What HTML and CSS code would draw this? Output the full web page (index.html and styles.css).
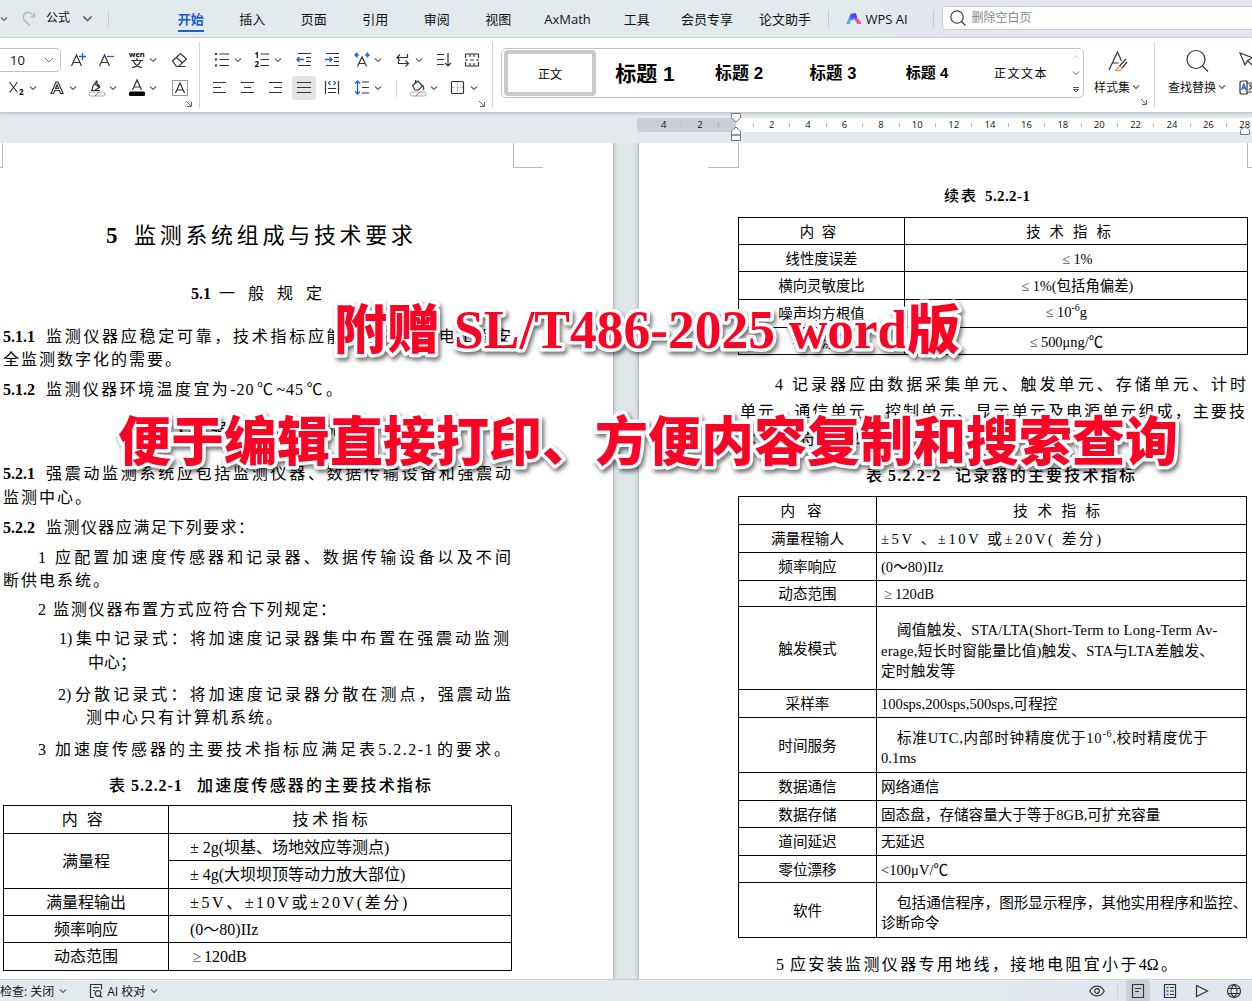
FILE: index.html
```html
<!DOCTYPE html>
<html lang="zh-CN">
<head>
    <meta charset="UTF-8">
    <title>WPS 文字</title>
    <link rel="stylesheet" href="styles.css">
</head>

<body>
    <svg class="defs">
        <symbol id="caret" viewBox="0 0 8 8"><path d="M1 2.500l3 3 3-3" fill="none" stroke="#666" stroke-width="1.200"/></symbol>
        <symbol id="corner" viewBox="0 0 8 8"><path d="M1 1l5 5M6.500 2v4.500h-4.500" fill="none" stroke="#666"/></symbol>
    </svg>

    <header class="tabbar">
        <div class="quick">
            <svg class="caret"><use href="#caret"/></svg>
            <svg class="redo" viewBox="0 0 14 16"><path d="M8 14.500L2.500 9.500C-.5 5 3 1 7 1.500c3 .3 4 2.500 5 4.500M12.500 1.500V6H8" fill="none" stroke="#adb3b8" stroke-width="1.200"/></svg>
            <span>公式</span>
            <svg class="caret big"><use href="#caret"/></svg>
        </div>
        <nav class="tabs">
            <a class="tab active"><span>开始</span></a>
            <a class="tab">插入</a>
            <a class="tab">页面</a>
            <a class="tab">引用</a>
            <a class="tab">审阅</a>
            <a class="tab">视图</a>
            <a class="tab ax">AxMath</a>
            <a class="tab">工具</a>
            <a class="tab vip">会员专享</a>
            <a class="tab paper">论文助手</a>
        </nav>
        <div class="ai">
            <svg width="16" height="14" viewBox="0 0 16 14">
                <defs><linearGradient id="g" x1="0" y1="1" x2="1" y2="0"><stop offset="0" stop-color="#36b4ff"/><stop offset=".5" stop-color="#3b55ff"/><stop offset="1" stop-color="#7a3cff"/></linearGradient></defs>
                <path d="M0 12L2 7.500h3L4 12z" fill="#45b6ff"/>
                <path d="M2 8L5 1.500h5L7 8z" fill="url(#g)"/>
                <path d="M7.500 1.500H10l1.500 5.500-3 .5z" fill="#4a3cf5"/>
                <path d="M8 7.500c3-2 5.500-1 7.500 4.500h-4.500c-.5-2-1.500-3-3-4.500z" fill="#f0559b"/>
            </svg>
            <span>WPS AI</span>
        </div>
        <div class="search">
            <svg width="16" height="16" viewBox="0 0 16 16"><circle cx="7" cy="7" r="6.200" fill="none" stroke="#444" stroke-width="1.200"/><path d="M11.500 11.500l4 4" stroke="#444" stroke-width="1.200"/></svg>
            <span>删除空白页</span>
        </div>
    </header>

    <section class="ribbon">
        <div class="group font-group">
            <div class="row">
                <div class="fontsize"><span>10</span><svg viewBox="0 0 10 6"><path d="M1 1l4 4 4-4" fill="none" stroke="#777"/></svg></div>
                <div class="tool"><svg viewBox="0 0 20 20"><path d="M2.500 16L7.500 5l5 11M4.200 12.500h6.600" class="ln"/><path d="M13.500 3v7M10 6.500h7" class="bl"/></svg></div>
                <div class="tool"><svg viewBox="0 0 20 20"><path d="M2.500 16L7.500 5l5 11M4.200 12.500h6.600" class="ln"/><path d="M10 6.500h7" class="bl"/></svg></div>
                <div class="tool drop g2"><svg viewBox="0 0 20 20"><text x="2" y="7" class="wen">wen</text><path d="M4 10.500h12M10 8v2.500M6.500 11c1.500 4 4.500 6 8.500 6.500M13.500 11c-1.500 4-4.500 6-8.500 6.500" class="ln"/></svg><svg class="caret"><use href="#caret"/></svg></div>
                <div class="tool g3"><svg viewBox="0 0 20 20"><path d="M2.500 11l8-7.500 6 5.500-8 7.500h-2zM6.500 7.500l6 5.500M6.500 16.500h9" class="ln"/></svg></div>
            </div>
            <div class="row second">
                <div class="tool drop"><svg viewBox="0 0 20 20"><path d="M2.500 4l8 10.500M10.500 4l-8 10.500" class="ln"/><text x="12" y="17" class="sub">2</text></svg><svg class="caret"><use href="#caret"/></svg></div>
                <div class="tool drop"><svg viewBox="0 0 20 20"><path d="M4 15.500L9 4h2l5 11.500h-2.500l-1.200-3H7.800l-1.200 3zM8.500 10.500h3L10 6.800z" class="ln"/></svg><svg class="caret"><use href="#caret"/></svg></div>
                <div class="tool drop"><svg viewBox="0 0 20 20"><path d="M4 12.500h9M5 12l1-4 4-5.500M8 6l4.500 3.500L8 12M10 2.500v3l3 3" class="ln"/><rect x="2" y="14" width="16" height="4" rx="2" fill="#fff" stroke="#aaa"/><path d="M8 18l4-4" stroke="#e05050"/></svg><svg class="caret"><use href="#caret"/></svg></div>
                <div class="tool drop"><svg viewBox="0 0 20 20"><path d="M5.500 12L10 2l4.500 10M7 9h6" class="ln"/><rect x="2" y="13.500" width="16" height="4.500" rx="1.500"/></svg><svg class="caret"><use href="#caret"/></svg></div>
                <div class="tool g3"><svg viewBox="0 0 20 20"><rect x="2.500" y="2.500" width="15" height="15" fill="none" stroke="#999"/><path d="M5.500 15L10 5l4.500 10M7 12h6" class="ln"/></svg></div>
            </div>
            <svg class="launcher"><use href="#corner"/></svg>
        </div>

        <div class="group para-group">
            <div class="row">
                <div class="tool drop"><svg viewBox="0 0 20 20"><path d="M7.500 4H17M7.500 9.500H17M7.500 15.500H17" class="ln"/><path d="M3 4h2M3 9.500h2M3 15.500h2" stroke="#333" stroke-width="2"/></svg><svg class="caret"><use href="#caret"/></svg></div>
                <div class="tool drop"><svg viewBox="0 0 20 20"><path d="M8.500 4H17M8.500 9.500H17M8.500 15.500H17" class="ln"/><text x="2.500" y="8" class="num">1</text><text x="2.500" y="17" class="num">2</text></svg><svg class="caret"><use href="#caret"/></svg></div>
                <div class="tool g2"><svg viewBox="0 0 20 20"><path d="M4 3.500h13M12 7.500h5M12 11.500h5M4 15.500h13" class="ln"/><path d="M3 9.500h7M5.500 7L3 9.500 5.500 12" class="bl"/></svg></div>
                <div class="tool"><svg viewBox="0 0 20 20"><path d="M4 3.500h13M12 7.500h5M12 11.500h5M4 15.500h13" class="ln"/><path d="M3 9.500h7M7.500 7l2.500 2.500L7.500 12" class="bl"/></svg></div>
                <div class="tool drop g2"><svg viewBox="0 0 20 20"><path d="M5.500 16.500L10 7l4.500 9.500M7 13.500h6" class="ln"/><path d="M3 5h4M13 5h4M5.500 2.500L3 5l2.500 2.500M14.500 2.500L17 5l-2.500 2.500" class="bl"/></svg><svg class="caret"><use href="#caret"/></svg></div>
                <div class="tool drop g1"><svg viewBox="0 0 20 20"><path d="M14.500 4v3.500H4M7 4.500l-3 3 3 3M5.500 10.500v3h10M12.500 10.500l3 3-3 3" class="ln"/></svg><svg class="caret"><use href="#caret"/></svg></div>
                <div class="tool g1"><svg viewBox="0 0 20 20"><path d="M3 4.500h7M3 9.500h7M3 14.500h7M14 3v13M11 13l3 3 3-3" class="ln"/></svg></div>
                <div class="tool"><svg viewBox="0 0 20 20"><path d="M3.500 8V4h13v4M3.500 12v4h13v-4M8 4v3M12 4v3M8 13v3M12 13v3M3 10h3M8 10h4M14 10h3" class="ln"/></svg></div>
            </div>
            <div class="row second">
                <div class="tool"><svg viewBox="0 0 20 20"><path d="M3 4.500h13M3 9.500h8M3 14.500h13" class="ln"/></svg></div>
                <div class="tool"><svg viewBox="0 0 20 20"><path d="M3 4.500h13M6 9.500h7M3 14.500h13" class="ln"/></svg></div>
                <div class="tool"><svg viewBox="0 0 20 20"><path d="M3 4.500h13M8 9.500h8M3 14.500h13" class="ln"/></svg></div>
                <div class="tool on"><svg viewBox="0 0 20 20"><path d="M3 4.500h14M3 9.500h14M3 14.500h14" class="ln"/></svg></div>
                <div class="tool"><svg viewBox="0 0 20 20"><path d="M3.500 3v13M16.500 3v13M6 10.500h8M6 14.500h8" class="ln"/><path d="M8.500 3L6.500 5l2 2M11.500 3l2 2-2 2" class="bl"/></svg></div>
                <div class="tool drop g2"><svg viewBox="0 0 20 20"><path d="M10 4h7M10 9.500h7M10 15h7" class="ln"/><path d="M5.500 3v13M3 5.500L5.500 3 8 5.500M3 13.500L5.500 16 8 13.500" class="bl"/></svg><svg class="caret"><use href="#caret"/></svg></div>
                <i class="sep"></i>
                <div class="tool drop"><svg viewBox="0 0 20 20"><path d="M8 2l-1 3M4.500 7.500L10 3l4.500 5-4 4H7z" class="ln"/><path d="M14 7c2 1 2 3 1.500 5" class="ln"/><rect x="2" y="14" width="16" height="4" rx="2" fill="#fff" stroke="#aaa"/><path d="M8 18l4-4" stroke="#e05050"/></svg><svg class="caret"><use href="#caret"/></svg></div>
                <div class="tool drop"><svg viewBox="0 0 20 20"><rect x="3.500" y="3.500" width="12" height="12" rx="1" class="ln"/><path d="M9.500 4v11M4 9.500h11" stroke="#aaa" stroke-dasharray="1 1"/></svg><svg class="caret"><use href="#caret"/></svg></div>
            </div>
            <svg class="launcher"><use href="#corner"/></svg>
        </div>

        <div class="gallery">
            <div class="style picked">正文</div>
            <div class="style h1">标题 1</div>
            <div class="style h2">标题 2</div>
            <div class="style h3">标题 3</div>
            <div class="style h4">标题 4</div>
            <div class="style body-text">正文文本</div>
            <div class="scroller">
                <svg viewBox="0 0 8 8"><path d="M1 5.500l3-3 3 3" fill="none" stroke="#ccc"/></svg>
                <svg viewBox="0 0 8 8"><path d="M1 2.500l3 3 3-3" fill="none" stroke="#666"/></svg>
                <svg viewBox="0 0 8 8"><path d="M1 2.500h6M1.500 4.500h5L4 7z" fill="none" stroke="#555"/></svg>
            </div>
        </div>

        <div class="group big-group sets">
            <svg class="pic" viewBox="0 0 24 24"><path d="M4 21L12.500 3l4 9M7.500 14h6" class="ln"/><path d="M21 10l-6.500 7M22 13l-5 6" class="ln"/><path d="M10.500 21.500c2 0 1.500-3.500 4-4.500 2 .5 3 2 2 3.500-1.500 2-4 1.500-6 1z" fill="#fbd9c3" stroke="#e07b3c"/></svg>
            <div class="label">样式集<svg class="caret"><use href="#caret"/></svg></div>
            <svg class="launcher"><use href="#corner"/></svg>
        </div>
        <div class="group big-group find">
            <svg class="pic" viewBox="0 0 24 24"><circle cx="11" cy="10.500" r="9" class="ln"/><path d="M17.500 17l5.500 5.500" class="ln"/></svg>
            <div class="label">查找替换<svg class="caret"><use href="#caret"/></svg></div>
        </div>
        <div class="edge">
            <svg viewBox="0 0 20 20"><path d="M1 3l5 12 2.500-4.500L14 8zM9 11l5 5" class="ln"/></svg>
            <svg viewBox="0 0 20 20"><path d="M8 3H3a2 2 0 00-2 2v9a2 2 0 002 2h5zM8 5h10v9H8" class="ln"/><path d="M2.500 12L4.800 6 7 12M3 10h3.500" class="bl"/><path d="M10 7h6M10 12l5-4M11 8l4 4" class="ln"/></svg>
        </div>
    </section>

    <div class="rulerbar">
        <div class="ruler">
            <div class="neg"><span>4</span><span>2</span><i></i></div>
            <div class="pos">
                <span>2</span><span>4</span><span>6</span><span>8</span><span>10</span><span>12</span><span>14</span><span>16</span><span>18</span><span>20</span><span>22</span><span>24</span><span>26</span><span>28</span>
            </div>
        </div>
        <svg class="handle first" viewBox="0 0 12 30"><path d="M1.500 1.500h9v4.500L6 10 1.500 6zM6 15l4.500 4v4h-9v-4zM1.500 23h9v5.500h-9z" fill="#fff" stroke="#777"/></svg>
        <svg class="handle last" viewBox="0 0 12 30"><path d="M6 14.500l4.500 4v4h-9v-4z" fill="#fff" stroke="#777"/></svg>
    </div>

    <main class="desk">
        <article class="page left">
            <div class="crops"><i></i><i></i></div>
            <p class="line title"><b>5</b><span>监测系统组成与技术要求</span></p>
            <p class="line sec"><b>5.1</b><span>一般规定</span></p>
            <p class="line full a511"><b>5.1.1</b><span>监测仪器应稳定可靠，技术指标应能满足不同水电工程安</span></p>
            <p class="line a511b"><span>全监测数字化的需要。</span></p>
            <p class="line a512"><b>5.1.2</b><span>监测仪器环境温度宜为<em>-20℃~45℃</em>。</span></p>
            <p class="line sec2"><b>5.2</b><span>强震动监测系统</span></p>
            <p class="line full a521"><b>5.2.1</b><span>强震动监测系统应包括监测仪器、数据传输设备和强震动</span></p>
            <p class="line a521b"><span>监测中心。</span></p>
            <p class="line a522"><b>5.2.2</b><span>监测仪器应满足下列要求：</span></p>
            <p class="line i1"><u>1</u><span>应配置加速度传感器和记录器、数据传输设备以及不间</span></p>
            <p class="line i1b"><span>断供电系统。</span></p>
            <p class="line i2"><u>2</u><span>监测仪器布置方式应符合下列规定：</span></p>
            <p class="line s1"><u>1)</u><span>集中记录式：将加速度记录器集中布置在强震动监测</span></p>
            <p class="line s1b"><span>中心；</span></p>
            <p class="line s2"><u>2)</u><span>分散记录式：将加速度记录器分散在测点，强震动监</span></p>
            <p class="line s2b"><span>测中心只有计算机系统。</span></p>
            <p class="line i3"><u>3</u><span>加速度传感器的主要技术指标应满足表<em>5.2.2-1</em>的要求。</span></p>
            <p class="line cap1"><span>表</span><b>5.2.2-1</b><span>加速度传感器的主要技术指标</span></p>
            <table class="t1">
                <colgroup><col class="k"><col></colgroup>
                <tr class="h28"><td class="wide">内 容</td><td class="mid">技术指标</td></tr>
                <tr class="h27"><td rowspan="2">满量程</td><td>± 2g(坝基、场地效应等测点)</td></tr>
                <tr class="h28"><td>± 4g(大坝坝顶等动力放大部位)</td></tr>
                <tr class="h27"><td>满量程输出</td><td class="volt">±5V、±10V或±20V(差分)</td></tr>
                <tr class="h27"><td>频率响应</td><td>(0～80)IIz</td></tr>
                <tr class="h28"><td>动态范围</td><td><i class="cmp">≥</i>120dB</td></tr>
            </table>
        </article>

        <article class="page right">
            <div class="crops"><i></i><i></i></div>
            <p class="line cont"><span>续表</span><b>5.2.2-1</b></p>
            <table class="t2">
                <colgroup><col class="k"><col></colgroup>
                <tr class="h27"><td class="wide">内 容</td><td class="wider">技术指标</td></tr>
                <tr class="h27"><td>线性度误差</td><td><i class="cmp">≤</i>1%</td></tr>
                <tr class="h28"><td>横向灵敏度比</td><td><i class="cmp">≤</i>1%(包括角偏差)</td></tr>
                <tr class="h28"><td>噪声均方根值</td><td class="shift up"><i class="cmp">≤</i>10<sup>-6</sup>g</td></tr>
                <tr class="h27"><td>零位漂移</td><td class="shift"><i class="cmp">≤</i>500μng/℃</td></tr>
            </table>
            <p class="line i4"><u>4</u><span>记录器应由数据采集单元、触发单元、存储单元、计时</span></p>
            <p class="line i4b"><span>单元、通信单元、控制单元、显示单元及电源单元组成，主要技</span></p>
            <p class="line i4c"><span>术指应符表5.2.2-2</span></p>
            <p class="line cap2"><span>表</span><b>5.2.2-2</b><span>记录器的主要技术指标</span></p>
            <table class="t3">
                <colgroup><col class="k"><col></colgroup>
                <tr class="h28"><td class="widest">内容</td><td class="wider mid">技术指标</td></tr>
                <tr class="h28"><td>满量程输人</td><td class="volt">±5V 、±10V 或±20V( 差分)</td></tr>
                <tr class="h28"><td>频率响应</td><td>(0～80)IIz</td></tr>
                <tr class="h26"><td>动态范围</td><td><i class="cmp">≥</i>120dB</td></tr>
                <tr class="h83"><td>触发模式</td><td class="multi trig">阈值触发、STA/LTA(Short-Term to Long-Term Av-<br>erage,短长时窗能量比值)触发、STA与LTA差触发、<br>定时触发等</td></tr>
                <tr class="h28"><td>采样率</td><td>100sps,200sps,500sps,可程控</td></tr>
                <tr class="h55"><td>时间服务</td><td class="multi"><span class="loose">标准UTC,内部时钟精度优于10<sup>-6</sup>,校时精度优于</span><br>0.1ms</td></tr>
                <tr class="h28"><td>数据通信</td><td>网络通信</td></tr>
                <tr class="h27"><td>数据存储</td><td>固态盘，存储容量大于等于8GB,可扩充容量</td></tr>
                <tr class="h28"><td>道间延迟</td><td>无延迟</td></tr>
                <tr class="h27"><td>零位漂移</td><td>&lt;100μV/℃</td></tr>
                <tr class="h55"><td>软件</td><td class="multi">包括通信程序，图形显示程序，其他实用程序和监控、<br>诊断命令</td></tr>
            </table>
            <p class="line i5"><u>5</u><span>应安装监测仪器专用地线，接地电阻宜小于4Ω。</span></p>
        </article>
    </main>

    <footer class="status">
        <span>检查: 关闭</span>
        <svg class="caret"><use href="#caret"/></svg>
        <svg class="proof" viewBox="0 0 14 14"><path d="M5 13.500H1.500V.5h11v5M4 3.500h6M4 6.500h2" class="ln"/><circle cx="9" cy="9.500" r="2.800" class="ln"/><path d="M11 11.500l2 2" class="ln"/></svg>
        <span>AI 校对</span>
        <svg class="caret"><use href="#caret"/></svg>
        <div class="views">
            <div class="view"><svg viewBox="0 0 16 16"><path d="M.8 8c3.500-6.500 10.900-6.500 14.400 0-3.500 6.500-10.900 6.500-14.400 0z" class="ln"/><circle cx="8" cy="8" r="2.300" class="ln"/></svg></div>
            <i class="sep"></i>
            <div class="view on"><svg viewBox="0 0 16 16"><path d="M2.500 1.500h11v13h-11zM5 5.500h6M5 8.500h4" class="ln"/></svg></div>
            <div class="view"><svg viewBox="0 0 16 16"><path d="M2.500 1.500h11v13h-11zM8 4.500h4M8 8h4M8 11.500h4" class="ln"/><path d="M4.500 4.500h2M4.500 8h2M4.500 11.500h2" class="bl"/></svg></div>
            <div class="view"><svg viewBox="0 0 16 16"><path d="M2.500 2.500v11l11-5.500z" class="ln"/></svg></div>
            <div class="view"><svg viewBox="0 0 16 16"><circle cx="8" cy="8" r="6.500" class="ln"/><path d="M8 1.500c-4 4-4 9 0 13 4-4 4-9 0-13zM2 5.500h12M2 10.500h12" class="ln"/></svg></div>
        </div>
    </footer>

    <svg class="banner" viewBox="0 0 1252 200">
        <text x="334" y="69" class="han">附赠</text>
        <text x="454" y="68" textLength="321" lengthAdjust="spacingAndGlyphs" class="lat">SL/T486-2025</text>
        <text x="789" y="68" textLength="118" lengthAdjust="spacingAndGlyphs" class="lat">word</text>
        <text x="907" y="69" class="han">版</text>
        <text x="118" y="181" textLength="1060" class="han">便于编辑直接打印、方便内容复制和搜索查询</text>
    </svg>
</body>
</html>
```
FILE: styles.css
```css
* {
    box-sizing: border-box;
}

body {
    position: relative;
    width: 1252px;
    height: 1001px;
    margin: 0;
    overflow: hidden;
    display: flex;
    flex-direction: column;
    background: #e2eaed;
    color: #111;
    font-family: "Open Sans", "Noto Sans CJK SC", sans-serif;
    font-size: 13px;
}

p {
    margin: 0;
}

svg {
    display: block;
    flex: none;
}

.defs {
    position: absolute;
    width: 0;
    height: 0;
}

.caret {
    width: 8px;
    height: 8px;
}

.ln {
    fill: none;
    stroke: #333;
    stroke-width: 1.2;
}

.bl {
    fill: none;
    stroke: #1b62d6;
    stroke-width: 1.3;
}

/* Tab bar */
.tabbar {
    flex: none;
    height: 38px;
    display: flex;
    align-items: center;
    border-bottom: 1px solid #c9cdd2;
    background: linear-gradient(90deg, #e2eaed 70%, #e2e6ee 76%);
}

.quick {
    width: 109px;
    height: 16px;
    display: flex;
    align-items: center;
    font-size: 12px;
    border-right: 1px solid #c5cacf;
}

.quick span {
    margin-top: -3px;
}

.redo {
    width: 14px;
    height: 16px;
    margin: 0 10px 0 14px;
}

.quick .big {
    width: 11px;
    height: 11px;
    margin-left: 12px;
}

.tabs {
    display: flex;
    height: 38px;
    margin-left: 51px;
}

.tab {
    width: 61.5px;
    line-height: 38px;
    text-align: center;
    white-space: nowrap;
}

.tab.ax {
    width: 77px;
}

.tab.vip {
    width: 79px;
}

.tab.paper {
    width: 77px;
}

.tab.active {
    color: #1b5fd0;
    font-weight: bold;
}

.tab.active span {
    display: inline-block;
    height: 32px;
    border-bottom: 2px solid #1b5fd0;
}

.ai {
    width: 106px;
    height: 18px;
    margin-left: 4px;
    padding-left: 17px;
    display: flex;
    align-items: center;
    gap: 4px;
    border-left: 1px solid #c5cacf;
    border-right: 1px solid #c5cacf;
    white-space: nowrap;
}

.search {
    flex: 1;
    height: 24px;
    margin: 0 -6px 2px 8px;
    padding-left: 7px;
    display: flex;
    align-items: center;
    gap: 6px;
    background: #fff;
    border: 1px solid #cbcfd4;
    border-radius: 4px;
    color: #888;
    font-size: 12px;
}

.search span {
    margin-top: -1px;
}

/* Ribbon */
.ribbon {
    flex: none;
    height: 75px;
    display: flex;
    background: #fff;
    border-bottom: 1px solid #c4c9cd;
    box-shadow: 0 1px 3px #c5cbd0;
}

.group {
    flex: none;
    margin-top: 4px;
    height: 66px;
    padding-top: 4px;
    border-right: 1px solid #d5d5d5;
}

.font-group {
    width: 200px;
}

.para-group {
    width: 293px;
    padding-left: 8px;
}

.row {
    display: flex;
    align-items: center;
    height: 28px;
}

.font-group .second {
    padding-left: 3px;
}

.para-group .second {
    margin-left: -2px;
}

.fontsize {
    width: 71px;
    height: 24px;
    margin: 0 4px 0 -10px;
    padding: 0 6px 0 19px;
    display: flex;
    align-items: center;
    justify-content: space-between;
    border: 1px solid #c4c4c4;
    border-radius: 4px;
}

.fontsize svg {
    width: 10px;
    height: 6px;
}

.tool {
    flex: none;
    display: flex;
    align-items: center;
    width: 28px;
    height: 24px;
    padding-left: 4px;
}

.tool svg {
    width: 20px;
    height: 20px;
    overflow: visible;
}

.tool .caret {
    width: 8px;
    height: 8px;
    margin-left: 2px;
}

.tool.drop {
    width: 40px;
}

.tool.on {
    background: #e3e3e3;
    border-radius: 3px;
    width: 24px;
    margin: 0 2px;
    padding-left: 2px;
}

.g1 {
    margin-left: 1px;
}

.g2 {
    margin-left: 2px;
}

.g3 {
    margin-left: 3px;
}

.wen {
    font: bold 7.5px "Open Sans", sans-serif;
}

.sub,
.num {
    font: bold 8px "Open Sans", sans-serif;
}

.sep {
    width: 1px;
    height: 17px;
    background: #cfcfcf;
}

.row .sep {
    margin: 0 7px 0 8px;
}

.launcher {
    width: 8px;
    height: 8px;
    margin: -2px 6px 0 auto;
}

.gallery {
    flex: none;
    width: 583px;
    height: 50px;
    margin: 10px 0 0 8px;
    padding-left: 2px;
    display: flex;
    align-items: center;
    border: 1px solid #c4c4c4;
    border-radius: 5px;
    color: #000;
}

.style {
    flex: none;
    width: 94px;
    height: 46px;
    padding-bottom: 3px;
    display: flex;
    align-items: center;
    justify-content: center;
    font-family: "Liberation Sans", "Noto Sans CJK SC", sans-serif;
    white-space: pre;
}

.picked {
    width: 92px;
    margin-right: 2px;
    padding: 0;
    border: 4px solid #c9c9c9;
    border-radius: 4px;
    font-size: 12px;
}

.h1 {
    font-size: 21px;
    font-weight: bold;
}

.h2 {
    font-size: 17px;
    font-weight: bold;
}

.h3 {
    font-size: 16.5px;
    font-weight: bold;
}

.h4 {
    font-size: 15px;
    font-weight: bold;
}

.body-text {
    padding-bottom: 1px;
    font-size: 12px;
    letter-spacing: 1.5px;
}

.scroller {
    display: flex;
    flex-direction: column;
    gap: 8px;
    margin-left: 4px;
}

.scroller svg {
    width: 8px;
    height: 8px;
}

.big-group {
    display: flex;
    flex-direction: column;
    align-items: center;
    font-size: 12px;
}

.sets {
    width: 71px;
    padding-right: 4px;
}

.find {
    width: 84px;
    border: 0;
}

.pic {
    width: 24px;
    height: 24px;
    margin: 3px 0 5px;
}

.label {
    display: flex;
    align-items: center;
    gap: 2px;
    height: 18px;
    white-space: nowrap;
}

.sets .launcher {
    margin: 2px 2px 0 auto;
}

.edge {
    padding-top: 12px;
    display: flex;
    flex-direction: column;
    gap: 8px;
}

.edge svg {
    width: 20px;
    height: 20px;
}

/* Ruler */
.rulerbar {
    flex: none;
    position: relative;
    height: 30px;
    padding: 5px 0 0 637px;
}

.ruler {
    display: flex;
    height: 14px;
    font-size: 9.5px;
    line-height: 14px;
    overflow: hidden;
    border-radius: 4px 0 0 4px;
}

.neg {
    flex: none;
    width: 99px;
    padding-left: 8px;
    display: flex;
    align-items: center;
    background: #cbced4;
}

.pos {
    flex: 1;
    padding-left: 17px;
    display: flex;
    align-items: center;
    background: #fff;
}

.ruler span {
    flex: none;
    width: 36.4px;
    height: 4px;
    line-height: 4px;
    text-align: center;
    border-left: 1px solid #b5b8bd;
}

.neg span:first-child {
    border-left-color: transparent;
}

.neg i {
    height: 4px;
    border-left: 1px solid #a5a8ad;
}

.handle {
    position: absolute;
    top: -1px;
    width: 12px;
    height: 30px;
}

.first {
    left: 730px;
}

.last {
    left: 1239px;
}

/* Pages */
.desk {
    flex: none;
    height: 836px;
    display: flex;
    gap: 24px;
    overflow: hidden;
    background: #e0e7eb;
}

.page {
    flex: none;
    height: 836px;
    background: #fff;
    color: #000;
    font-family: "Liberation Serif", "Noto Sans CJK SC", serif;
    font-size: 16px;
    box-shadow: 0 0 4px #b0b6bb;
}

.left {
    width: 614px;
    padding-left: 3px;
    border-right: 1px solid #b9bdc1;
}

.right {
    width: 614px;
    padding-left: 99px;
    border-left: 1px solid #b9bdc1;
}

.crops {
    height: 25px;
    display: flex;
    justify-content: space-between;
}

.crops i {
    border: 0 solid #bbb;
    border-bottom-width: 1px;
}

.left .crops {
    width: 543px;
    margin-left: -3px;
}

.left .crops i:first-child {
    width: 3px;
    border-right-width: 1px;
}

.left .crops i:last-child {
    width: 30px;
    border-left-width: 1px;
}

.right .crops {
    margin-left: -30px;
}

.right .crops i:first-child {
    width: 31px;
    border-right-width: 1px;
}

.right .crops i:last-child {
    width: 5px;
    border-left-width: 1px;
}

/* every printed line is stretched to its own measure */
.line {
    display: flex;
    height: 23px;
    line-height: 23px;
    white-space: nowrap;
}

.line span {
    flex: 1;
    text-align: justify;
    text-align-last: justify;
}

.line b {
    width: 43px;
}

.line u {
    width: 17px;
    text-decoration: none;
}

.line em {
    font-style: normal;
    letter-spacing: 1.5px;
}

.title {
    width: 307px;
    margin: 56px 0 0 103px;
    font-size: 22px;
}

.title b {
    width: 28px;
    font-size: 23px;
}

.sec {
    width: 131px;
    margin: 35px 0 0 188px;
}

.sec b {
    width: 28px;
}

.full {
    width: 508px;
}

.a511 {
    margin-top: 20px;
}

.a511b {
    width: 178px;
}

.a512 {
    width: 339px;
    margin-top: 7px;
}

.a512 em {
    letter-spacing: 1px;
}

.sec2 {
    width: 164px;
    margin: 17px 0 0 172px;
}

.sec2 b {
    width: 36px;
}

.a521 {
    margin-top: 21px;
}

.a521b {
    width: 88px;
    margin-top: 1px;
}

.a522 {
    width: 251px;
    margin-top: 7px;
}

.i1 {
    width: 473px;
    margin: 7px 0 0 35px;
}

.i1b {
    width: 106px;
}

.i2 {
    width: 298px;
    margin: 6px 0 0 35px;
}

.i2 u {
    width: 15px;
}

.s1 {
    width: 450px;
    margin: 6px 0 0 56px;
}

.s1b {
    width: 48px;
    margin: 1px 0 0 85px;
}

.s2 {
    width: 453px;
    margin: 9px 0 0 55px;
}

.s2b {
    width: 196px;
    margin-left: 83px;
}

.i3 {
    width: 472px;
    margin: 9px 0 0 35px;
}

.cap1,
.cap2,
.cont {
    font-weight: 500;
}

.cap1 span:first-child,
.cap2 span:first-child {
    flex: none;
    width: 22px;
}

.cap1 {
    width: 322px;
    margin: 13px 0 0 106px;
}

.cap1 b {
    width: 66px;
    letter-spacing: 0.9px;
}

.cont {
    width: 90px;
    margin: 17px 0 0 206px;
    font-size: 15px;
}

.cont span {
    flex: none;
    width: 32px;
}

.cont b {
    margin-left: 9px;
    letter-spacing: 0.4px;
}

.i4 {
    width: 471px;
    margin: 18px 0 0 37px;
}

.i4b {
    width: 505px;
    margin: 4px 0 0 2px;
}

.i4c {
    width: 145px;
    margin: 4px 0 0 2px;
}

.cap2 {
    width: 269px;
    margin: 14px 0 0 128px;
}

.cap2 b {
    width: 67px;
    letter-spacing: 1.2px;
}

.i5 {
    width: 401px;
    margin: 15px 0 0 38px;
}

.i5 u {
    width: 14px;
}

/* Tables */
table {
    width: 509px;
    table-layout: fixed;
    border-collapse: separate;
    border-spacing: 0;
    border: 0 solid #000;
    border-width: 0 1px 1px 0;
    line-height: 20px;
}

td {
    padding: 1px 0 0;
    border: 0 solid #000;
    border-width: 1px 0 0 1px;
    text-align: center;
    white-space: nowrap;
    vertical-align: middle;
}

.cmp {
    display: inline-block;
    width: 14px;
    color: #555;
    font-style: normal;
    text-align: center;
}

.t1 {
    margin: 8px 0 0;
}

.t1 .k {
    width: 165px;
}

.t1 td + td,
.t1 tr:nth-child(3) td {
    padding-left: 21px;
    text-align: left;
}

.t1 td.wide {
    padding-right: 5px;
    letter-spacing: 2.5px;
}

.t1 td.mid {
    padding: 1px 16px 0 0;
    letter-spacing: 3.8px;
    text-align: center;
}

.t2 {
    width: 510px;
    margin-top: 9px;
    font-size: 14.4px;
}

.t2 .k {
    width: 166px;
}

.t2 .wide {
    padding-right: 5px;
    letter-spacing: 2px;
}

.t2 .wider {
    padding-right: 6px;
    letter-spacing: 9px;
}

.t2 .shift {
    padding-right: 22px;
}

.t2 .up {
    padding: 0 22px 3px 0;
}

.t3 {
    margin-top: 9px;
    font-size: 14.6px;
}

.t3 .k {
    width: 138px;
}

.t3 td + td {
    padding-left: 4px;
    text-align: left;
}

.t3 td.wider {
    padding-left: 0;
    letter-spacing: 9.5px;
    text-align: center;
}

.t3 .widest {
    padding-right: 1px;
    letter-spacing: 12px;
}

.t3 td.multi {
    padding-top: 6px;
    line-height: 20.5px;
    text-indent: 16px;
}

.trig {
    letter-spacing: 0.25px;
}

.loose {
    letter-spacing: 0.75px;
}

.volt {
    letter-spacing: 2.6px;
}

.h26 { height: 26px; }
.h27 { height: 27px; }
.h28 { height: 28px; }
.h55 { height: 55px; }
.h83 { height: 83px; }

sup {
    font-size: 10px;
    line-height: 0;
}

/* Status bar */
.status {
    flex: none;
    height: 22px;
    display: flex;
    align-items: center;
    border-top: 1px solid #c8ccd0;
    background: linear-gradient(90deg, #e2eaed 80%, #e2e6ee 86%);
    font-size: 12px;
    white-space: nowrap;
}

.status .caret {
    margin-left: 5px;
}

.proof {
    width: 14px;
    height: 14px;
    margin: 0 4px 0 22px;
}

.views {
    margin-left: auto;
    display: flex;
    align-items: center;
}

.view {
    width: 24px;
    height: 22px;
    margin-right: 8px;
    display: flex;
    align-items: center;
    justify-content: center;
}

.view svg {
    width: 16px;
    height: 16px;
}

.view:last-child {
    margin-right: 6px;
}

.views .sep {
    height: 14px;
    margin-right: 8px;
}

.view.on {
    background: #cbd0d7;
    border-radius: 3px;
}

/* Promo text laid over the window */
.banner {
    position: absolute;
    left: 0;
    top: 280px;
    width: 1252px;
    height: 200px;
    filter: drop-shadow(2px 3px 2px rgba(0, 0, 0, 0.55));
}

.banner text {
    fill: #fb0324;
    stroke: #fff;
    stroke-width: 7px;
    stroke-linejoin: round;
    paint-order: stroke;
}

.han {
    font: 900 53px "Noto Sans CJK SC", sans-serif;
}

.lat {
    font: bold 54px "Liberation Serif", serif;
}
```
